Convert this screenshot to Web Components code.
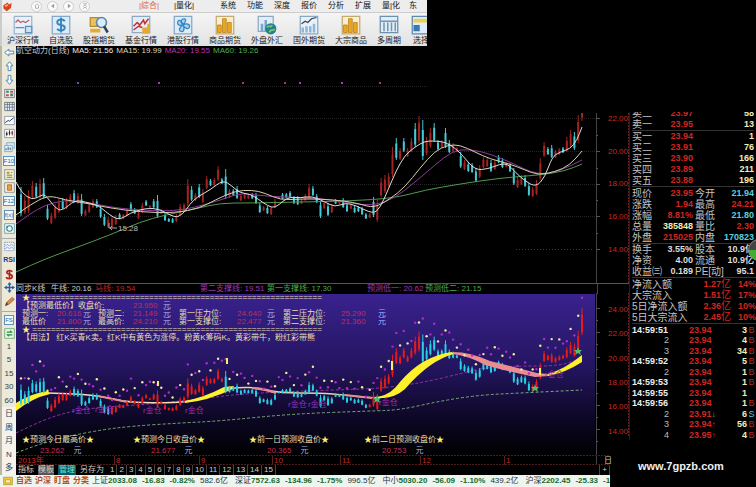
<!DOCTYPE html>
<html lang="zh-CN">
<head>
<meta charset="utf-8">
<title>航空动力 日线</title>
<style>
  html { background: #000; }
  body {
    margin: 0; background: #000; color: #ccc;
    font: 8px/10px "Liberation Sans", "Noto Sans CJK SC", sans-serif;
  }
</style>
</head>
<body>
<trade-terminal></trade-terminal>

<script>
// 16x16 glyphs, shared by the toolbar and the side rail
const ICONS = {
  logo: '<path d="M2 6 8 2l2 3 4-2-1 7-6 5-5-4z" fill="#d9441c"/><path d="M4 6l4-2 1 3-4 2z" fill="#f9a060"/>',
  home: '<path d="M2 8l6-6 6 6M4 8v6h8V8" fill="none" stroke="#999" stroke-width="2"/>',
  prev: '<path d="M11 2 3 8l8 6z" fill="#999"/>',
  next: '<path d="M5 2l8 6-8 6z" fill="#999"/>',
  top: '<path d="M3 2h10M3 9l5-4 5 4M3 15l5-4 5 4" fill="none" stroke="#999" stroke-width="2"/>',
  lines: '<path d="M1 1h14v14H1z" fill="#e8f0f8" stroke="#9ab4cc"/><path d="M2 6l2-2 2 2 2-1 2 1 3-2" fill="none" stroke="#b86070"/><path d="M2 10h7M10 9h5v5h-5z" fill="#cfe2f4" stroke="#5b90bd"/>',
  dollar: '<path d="M1 1h14v14H1z" fill="#dcecf8" stroke="#84a9c8"/><path d="M11 5c-1-2-6-2-6 1s6 1 6 4-5 3-6 1M8 2v12" fill="none" stroke="#3584bd" stroke-width="1.5"/>',
  search: '<path d="M1 2h7v7H1z" fill="#eac35c" stroke="#ba8a28"/><path d="M1 11h8v3H1z" fill="#e6ab31"/><circle cx="10" cy="6" r="4" fill="#d8edfa" stroke="#5c86a8" stroke-width="1.3"/><path d="M12 9l3 5" stroke="#345" stroke-width="2"/>',
  fund: '<path d="M1 1h14v13H1z" fill="#e2edf6" stroke="#8ca9c4"/><path d="M2 9l3-3 2 2 3-4 1 3 3-4M2 12l4-3 3 1" fill="none" stroke="#bf3030" stroke-width="1.2"/><path d="M9 10h5v5H9zM13 7h2v8h-2z" fill="#e5aa32"/>',
  flower: '<path d="M1 1h14v14H1z" fill="#dcecf8" stroke="#84a9c8"/><path d="M8 8c-3-3-1-5 1-5s1 3-1 5c4-2 6 0 5 2s-4 0-5-2c2 4 0 6-2 5s0-4 2-5c-4 1-5-1-4-3s4 1 4 3z" fill="#a6d4f2" stroke="#3886be"/>',
  bars: '<path d="M1 1h14v14H1z" fill="#f7eed4" stroke="#c5aa70"/><path d="M2 8h3v6H2zM6 3h3v11H6zM10 6h3v8h-3z" fill="#e9a823" stroke="#bc7a13" stroke-width=".6"/>',
  globe: '<path d="M1 1h12v12H1z" fill="#e2edf6" stroke="#8ca9c4"/><path d="M3 7h2v6H3zM6 4h2v9H6z" fill="#72a7cf"/><circle cx="11" cy="11" r="4.5" fill="#237e8d"/><path d="M8 10c2-3 3 1 4-2M10 14c0-3 4-1 4-3" stroke="#79c66a" fill="none" stroke-width="1.5"/>',
  area: '<path d="M1 1h14v14H1z" fill="#e8f0f8" stroke="#8ca9c4"/><path d="M2 7l3-2 2 1 3-3 4-1" fill="none" stroke="#345"/><path d="M3 14v-4M6 14V9M9 14v-5M12 14V7" stroke="#8fb6d6" stroke-width="2"/>',
  grid: '<path d="M1 1h14v13H1z" fill="#e2edf6" stroke="#6c91b0"/><path d="M1 5h14M4 6v7M7 6v7M10 6v7M13 6v7" stroke="#7296b4" stroke-width="1.2"/>',
  pick: '<path d="M1 1h14v14H1z" fill="#dcecf8" stroke="#5f88a8"/><path d="M2 3h12v3H2z" fill="#e8d050"/><path d="M2 8h5v5H2z" fill="#3b79ac"/>',
  left: '<path d="M1 8l6-5v3h7v4H7v3z" fill="#fff" stroke="#3f7fb8" stroke-width="1.3"/>',
  up: '<path d="M8 1l5 6h-3v7H6V7H3z" fill="#fff" stroke="#3f7fb8" stroke-width="1.3"/>',
  down: '<path d="M8 15l5-6h-3V2H6v7H3z" fill="#fff" stroke="#3f7fb8" stroke-width="1.3"/>',
  report: '<path d="M1 2h14v12H1z" fill="#e5edf2" stroke="#557"/><path d="M3 4h4v3H3zM9 8h4v4H9z" fill="#3c8a70"/><path d="M9 4h4v3H9zM3 9h4v3H3z" fill="#c25050"/>',
  table: '<path d="M1 2h14v12H1z" fill="#e8eef2" stroke="#456"/><path d="M1 5h14M1 9h14M5 2v12M8 2v12M12 2v12" stroke="#567"/>',
  trend: '<path d="M1 2h14v12H1z" fill="#fff" stroke="#679"/><path d="M2 11l4-3 2 1 6-5" fill="none" stroke="#234" stroke-width="1.4"/>',
  kline: '<path d="M1 2h14v12H1z" fill="#fff" stroke="#679"/><path d="M4 5v7M8 3v8M12 4v7" stroke="#222"/><path d="M3 7h2v3H3zM7 5h2v4H7z" fill="#222"/><path d="M11 5h2v4h-2z" fill="#b22"/>',
  stack: '<path d="M4 1h11v8H4z" fill="#dcecf8" stroke="#5d93bd"/><path d="M1 5h11v9H1z" fill="#e8f3fa" stroke="#5d93bd"/><path d="M3 12V9M6 12V7M9 12V8" stroke="#368" stroke-width="1.5"/>',
  news: '<path d="M1 1h14v14H1z" fill="#f6f2d0" stroke="#678"/><path d="M4 4h4v3H4z" fill="#d68530"/><path d="M4 9h8M4 12h8M10 5h2" stroke="#578a4a" stroke-width="1.4"/>',
  block: '<path d="M1 1h14v14H1z" fill="#f8eddb" stroke="#678"/><path d="M5 4h6v8H5z" fill="#e8a040" stroke="#b64a20"/>',
  cycle: '<path d="M1 1h14v14H1z" fill="#f2faf8" stroke="#47859b"/><circle cx="8" cy="8" r="4" fill="none" stroke="#38818a" stroke-width="1.5"/><path d="M3 4l3 1-1 3" fill="#38818a"/>',
  wave: '<path d="M1 2h14v12H1z" fill="#f0f6ff" stroke="#557db0" stroke-dasharray="2 1"/><path d="M2 7l3-2 3 2 3-2 3 2M2 11l3-2 3 2 3-2 3 2" fill="none" stroke="#77a"/>',
  money: '<path d="M12 4c-2-3-8-2-8 1s8 2 8 6-7 4-9 1M8 1v14" fill="none" stroke="#b02420" stroke-width="2.4"/>',
  move: '<path d="M8 0l3 4H9v3h3V5l4 3-4 3V9H9v3h2l-3 4-3-4h2V9H4v2L0 8l4-3v2h3V4H5z" fill="#2b5d9c"/>',
  pencil: '<path d="M2 14l2-5 8-7 3 3-8 7z" fill="#d89048" stroke="#8c4c20"/><path d="M2 14l2-5 2 3z" fill="#432"/>',
  swap: '<path d="M1 1h14v14H1z" fill="#e8f7e4" stroke="#4a9a5a"/><path d="M4 6h7l-2-2M12 10H5l2 2" fill="none" stroke="#2d8a40" stroke-width="1.7"/>',
  mail: '<path d="M1 2h14v12H1z" fill="#f2c840" stroke="#a88018"/><path d="M4 6h8v5H4z" fill="#fff3b0" stroke="#b88f26"/>'
};

const icon = (name) => `<svg viewBox="0 0 16 16" aria-hidden="true">${ICONS[name]}</svg>`;

function define(name, render) {
  customElements.define(name, class extends HTMLElement {
    constructor() {
      super();
      this.attachShadow({ mode: 'open' });
    }
    connectedCallback() {
      this.shadowRoot.innerHTML = render(this);
    }
  });
}

/* ---------- price data ---------- */

// one entry per day: r = up, c = down, then the high and low on the main chart
const DAYS = (
  'c187-216 r196-214 r190-213 r181-199 c183-198 r179-199 c178-199 c205-220 r213-224 r204-219 r199-213 c198-209 ' +
  'r198-209 r194-203 c190-203 r193-204 c194-216 r209-216 r203-213 r199-208 c199-208 c206-218 c214-226 r217-228 ' +
  'r216-228 r215-225 c213-219 r214-219 r209-216 c202-211 c208-214 r211-219 r203-213 c200-206 r205-208 ' +
  'c199-208 c195-218 r209-214 c213-221 c218-222 c218-223 r214-222 r204-216 r203-211 r179-206 c186-201 r193-201 ' +
  'c184-198 r189-203 r176-189 c179-186 r178-186 r166-181 c178-184 c169-199 r189-198 c189-196 c186-199 r194-201 ' +
  'r193-199 r194-199 c193-199 c193-204 c203-213 r206-211 c206-214 r206-215 r199-208 r196-199 c193-199 c193-198 ' +
  'c191-198 c196-204 c196-205 r199-204 r194-201 r184-199 c186-196 c194-203 c201-218 r201-209 c203-216 r204-213 ' +
  'c199-204 r200-204 c198-208 c203-212 r204-209 c206-213 c206-212 c207-215 c213-219 r213-218 c197-217 r200-222 ' +
  'r178-197 r175-193 r173-187 r147-177 c138-160 r148-160 c138-152 r148-157 r138-152 c123-147 r116-143 c120-160 ' +
  'r137-155 r128-148 c123-142 c140-150 r140-148 c128-148 c140-153 r143-152 r147-152 c152-168 r160-170 c162-172 ' +
  'c163-173 c168-182 r165-178 r157-168 r158-167 c160-172 r160-170 c155-163 c158-168 r162-167 c163-172 c168-185 ' +
  'r177-188 r175-185 c175-187 c183-196 r187-197 r180-195 r158-180 r142-157 c147-155 c145-158 r150-158 r148-155 ' +
  'c147-153 r137-152 r130-147 c132-150 r115-143 r84-121'
).split(' ').map((entry, i, all) => {
  const [high, low] = entry.slice(1).split('-').map(Number);
  return { up: entry[0] === 'r', high, low, x: 21 + i * 561 / (all.length - 1) };
});

const SCALE = 0.745;
const toLower = (y) => 333 + (y - 118) * SCALE;

// x ranges where the signal chart paints falling days
const FALLING = [[16, 50], [74, 110], [224, 366], [420, 531]];

function candle(x, high, low, colour, width) {
  const body = (low - high) / 4;
  return `<path d="M${x.toFixed(1)} ${high.toFixed(1)}V${low.toFixed(1)}" stroke="${colour}"/>` +
    `<rect x="${(x - width / 2).toFixed(1)}" y="${(high + body).toFixed(1)}" width="${width}" height="${(body * 2.6).toFixed(1)}" fill="${colour}"/>`;
}

// smooth line through "x,y x,y ..." points
function curve(points, attrs) {
  const p = points.split(' ').map((s) => s.split(',').map(Number));
  let d = `M${p[0]}`;
  for (let i = 1; i < p.length; i++) {
    const mid = (p[i - 1][0] + p[i][0]) / 2;
    const my = (p[i - 1][1] + p[i][1]) / 2;
    d += i === 1 ? `L${mid},${my}` : `Q${p[i - 1]} ${mid},${my}`;
  }
  return `<path d="${d}L${p.at(-1)}" fill="none" ${attrs}/>`;
}

/* ---------- menu and toolbar ---------- */

define('tool-item', (el) => `
  <style>
    :host { display: block; flex: none; }
    button {
      display: flex; flex-direction: column; align-items: center; gap: 1px;
      padding: 0; border: 0; background: none; color: #222; font: inherit;
      line-height: 10px; white-space: nowrap;
    }
    svg { width: 20px; height: 20px; display: block; }
  </style>
  <button type="button">${icon(el.getAttribute('icon'))}<span><slot></slot></span></button>
`);

define('menu-bar', () => `
  <style>
    :host { display: block; overflow: hidden; height: 46px; background: linear-gradient(#fcfcfc, #e2e2e2); border-left: 2px solid #ccc; box-sizing: border-box; }
    nav { display: grid; grid-template-columns: 29px 108px 35px 46px repeat(7, 27px) 20px; height: 12px; align-items: center; background: #ededed; color: #111; overflow: hidden; }
    a { color: inherit; text-decoration: none; white-space: nowrap; line-height: 12px; }
    a.on { color: #d86a35; }
    .logo svg { width: 11px; height: 11px; display: block; }
    .round { display: flex; gap: 5px; }
    .round button { width: 11px; height: 11px; padding: 1px; border: 1px solid #ccc; border-radius: 50%; background: #fafafa; display: grid; place-items: center; box-sizing: border-box; }
    .round svg { width: 6px; height: 6px; }
    .tools { display: flex; gap: 10px; padding: 2px 0 0 5px; border-top: 1px solid #ccc; }
  </style>
  <nav>
    <span class="logo">${icon('logo')}</span>
    <span class="round">
      <button aria-label="首页">${icon('home')}</button><button aria-label="后退">${icon('prev')}</button>
      <button aria-label="前进">${icon('next')}</button><button aria-label="顶部">${icon('top')}</button>
    </span>
    <a class="on" href="#">|综合|</a><a href="#">|量化|</a>
    ${['系统', '功能', '深度', '报价', '分析', '扩展', '量|化', '东'].map((t) => `<a href="#">${t}</a>`).join('')}
  </nav>
  <div class="tools">
    <tool-item icon="lines">沪深行情</tool-item>
    <tool-item icon="dollar">自选股</tool-item>
    <tool-item icon="search">股指期货</tool-item>
    <tool-item icon="fund">基金行情</tool-item>
    <tool-item icon="flower">港股行情</tool-item>
    <tool-item icon="bars">商品期货</tool-item>
    <tool-item icon="globe">外盘外汇</tool-item>
    <tool-item icon="area">国外期货</tool-item>
    <tool-item icon="bars">大宗商品</tool-item>
    <tool-item icon="grid">多周期</tool-item>
    <tool-item icon="pick">选择</tool-item>
  </div>
`);

define('side-rail', () => {
  const pic = (name, label) => `<button aria-label="${label}">${icon(name)}</button>`;
  const txt = (t, cls = '') => `<button class="${cls}">${t}</button>`;
  return `
  <style>
    :host { display: flex; flex-direction: column; background: #ece9d8; border-left: 2px solid #bbb5a5; box-sizing: border-box; }
    button {
      flex: 1 1 0; min-height: 0; padding: 0; border: 0; background: none; color: #345;
      font: inherit; line-height: 10px; display: grid; place-items: center;
    }
    svg { width: 11px; height: 11px; }
    hr { width: 100%; height: 3px; margin: 0; border: 0; border-bottom: 1px solid #aaa; margin-bottom: 1px; }
    .rsi { font-weight: bold; font-size: 7px; color: #22369c; }
    .box span { border: 1px solid #5d93bd; background: #f2f8fc; color: #2b6a9c; line-height: 8px; font-size: 6px; }
    .cjk { font-size: 8px; color: #246; background: #f4f2ea; }
  </style>
  ${pic('left', '左')}${pic('up', '上')}${pic('down', '下')}
  ${pic('report', '报表')}${pic('table', '列表')}${pic('trend', '走势')}${pic('kline', 'K线')}${pic('stack', '多图')}
  ${txt('<span>F10</span>', 'box')}${pic('news', '资讯')}${pic('block', '板块')}
  ${txt('<span>F12</span>', 'box')}${txt('<span>f(x)</span>', 'box')}${pic('cycle', '刷新')}
  <hr>
  ${pic('wave', '指标')}${txt('RSI', 'rsi')}${pic('money', '资金')}${pic('move', '移动')}${pic('pencil', '画线')}
  <hr>
  ${txt('<span>FS</span>', 'box')}${pic('swap', '切换')}
  ${['1', '5', '15', '30', '60'].map((t) => txt(t)).join('')}
  ${['日', '周', '月', 'N', '多'].map((t) => txt(t, 'cjk')).join('')}`;
});

/* ---------- charts ---------- */

define('price-chart', () => `
  <style>
    :host { display: block; }
    p { margin: 0; display: flex; gap: 3px; white-space: nowrap; line-height: 10px; color: #ccc; overflow: hidden; }
    .ma5 { color: #eee; } .ma15 { color: #ddd8b8; } .ma20 { color: #b035b8; } .ma60 { color: #55a858; }
    svg { display: block; width: 100%; height: auto; }
    text { font-size: 8px; fill: #c42a22; }
    .low { fill: #bbb; }
  </style>
  <p><span>航空动力(日线)</span><span class="ma5">MA5: 21.56</span><span class="ma15">MA15: 19.99</span><span class="ma20">MA20: 19.55</span><span class="ma60">MA60: 19.26</span></p>
  <svg viewBox="16 56 613 227" role="img" aria-label="日K线">
    <clipPath id="view"><path d="M16 56h411v57h202v170H16z"/></clipPath>
    <g clip-path="url(#view)">
      <path d="M16 86.500H596M16 118.500H596M16 151.500H596M16 184.500H596M16 216.500H596" stroke="#252525" stroke-dasharray="1 1"/>
      <path d="M110 249.500H238M516 249.500H594" stroke="#3a3a3a" stroke-dasharray="1 2"/>
      <path d="M596.500 113V283" stroke="#444"/>
      <path d="M628.500 113V283" stroke="#6a2020" stroke-dasharray="2 1"/>
      <path d="M596 118.500h4M596 135.500h2M596 151.500h4M596 168.500h2M596 184.500h4M596 200.500h2M596 216.500h4M596 233.500h2M596 249.500h4" stroke="#555"/>
      ${DAYS.map((d) => candle(d.x, d.high, d.low, d.up ? '#a3241e' : '#45c9d6', 2)).join('')}
      ${curve('16,272 45,259 75,248 110,235 140,222 165,215 195,209 220,203 250,203 300,202 350,201 395,198 425,190 460,184 500,178 540,175 565,171 582,164', 'stroke="#4f9a50"')}
      ${curve('16,224 30,214 45,205 65,200 85,202 105,206 125,209 175,212 215,202 240,193 255,195 280,197 320,198 350,203 374,206 395,198 415,182 435,165 452,151 470,149 490,154 510,162 537,175 560,171 582,160', 'stroke="#8b3a9a"')}
      ${curve('16,215 30,205 48,195 65,200 85,203 110,208 140,212 175,213 200,208 215,200 235,191 252,190 265,193 280,200 300,199 320,199 345,201 360,204 374,208 390,199 405,187 420,168 435,151 448,145 460,145 475,152 490,159 510,164 525,170 538,175 555,172 570,165 582,151', 'stroke="#d8cfa8"')}
      ${curve('16,182 22,193 32,200 40,196 45,194 55,208 62,211 75,200 85,202 98,205 106,212 113,217 120,220 130,213 146,208 160,209 175,218 183,214 190,204 197,197 210,190 223,180 232,186 240,193 250,194 258,199 268,206 275,208 283,201 290,197 300,198 312,196 325,202 335,207 345,203 355,205 373,214 380,208 388,190 396,171 405,155 415,147 425,141 435,141 445,142 455,148 463,156 475,170 488,169 500,164 508,164 515,172 525,181 536,187 545,177 552,157 560,152 570,149 577,140 582,127', 'stroke="#ddd"')}
      <path d="M109 223v5h8M112 226l-2 2 2 2" fill="none" stroke="#aaa"/>
      <text class="low" x="118" y="231">15.28</text>
      ${[[78, '#7048c0'], [159, '#a838b8'], [243, '#b83848'], [285, '#b83848'], [300, '#a838b8'], [342, '#a838b8'], [380, '#b83848']]
        .map(([x, c]) => `<path d="M${x - 1} 82l2 2m0-2l-2 2" stroke="${c}"/>`).join('')}
      ${['22.00', '20.00', '18.00', '16.00', '14.00'].map((t, i) => `<text x="608" y="${121 + Math.round(i * 32.7)}">${t}</text>`).join('')}
    </g>
  </svg>
`);

define('signal-chart', () => {
  const days = DAYS.map((d) => ({
    x: d.x, high: toLower(d.high), low: toLower(d.low),
    down: FALLING.some(([a, b]) => d.x >= a && d.x <= b)
  }));
  const dots = days.map((d, i) => {
    const y = Math.max(297, d.high - 6 - (i * 7) % 12);
    return `<circle cx="${d.x.toFixed(1)}" cy="${y.toFixed(1)}" r="1.2" fill="${(i * 3) % 5 < 2 ? '#f4eaa0' : '#b02ad0'}"/>`;
  }).join('');
  const star = (x, y) => `<path transform="translate(${x} ${y})" d="M0-4 1-1H4L2 1 3 4 0 2-3 4-2 1-4-1H-1z" fill="#4cc06c"/>`;
  const cells = (row) => row.map((t, i) => `<span class="${['', 'num', 'unit'][i % 3]}">${t}</span>`).join('');
  const rule = `<div class="rule"><b>★</b> ${'='.repeat(62)}</div>`;
  const forecast = [['预测今日最高价', '23.262'], ['预测今日收盘价', '21.677'], ['前一日预测收盘价', '20.365'], ['前二日预测收盘价', '20.753']];
  return `
  <style>
    :host { display: block; }
    .head { display: grid; grid-template-columns: 35px 44px 105px 67px 100px 58px 1fr 32px; height: 10px; line-height: 10px; border-top: 1px solid #555; box-sizing: border-box; white-space: nowrap; color: #ccc; }
    .head i { border-left: 1px solid #444; }
    .red { color: #b52c2c; } .violet { color: #a035b0; } .green { color: #4ca850; }
    .stage { display: grid; }
    .stage > * { grid-area: 1 / 1; }
    svg { display: block; width: 100%; height: auto; }
    .axis { font-size: 8px; fill: #c42a22; }
    .mark { font-size: 8px; fill: #9a2fb4; }
    .over { display: flex; flex-direction: column; justify-content: space-between; color: #e9dfae; white-space: nowrap; line-height: 8px; padding: 1px 0 9px 6px; }
    .grid { display: grid; grid-template-columns: 35px 26px 15px 35px 30px 16px 58px 30px 16px 58px 37px 1fr; }
    .sub { display: grid; grid-template-columns: 111px 30px 1fr; }
    .num { color: #c42c50; } .unit { color: #a0aff0; }
    b { font-weight: normal; color: #fff26a; }
    .days { display: grid; grid-template-columns: 111px 116px 115px 1fr; line-height: 11px; }
    .days p { margin: 0; display: flex; gap: 9px; padding-left: 18px; }
  </style>
  <div class="head">
    <span>同步K线</span><span>牛线: 20.16</span><span class="red">马线: 19.54</span>
    <span class="violet">第二支撑线: 19.51</span><span class="green">第一支撑线: 17.30</span>
    <span class="violet">预测低一: 20.62</span><span class="green">预测低二: 21.15</span><i></i>
  </div>
  <div class="stage">
    <svg viewBox="16 293 613 172" role="img" aria-label="预测信号">
      <defs><linearGradient id="sky" x2="0" y2="1">
        <stop offset="0" stop-color="#39228e"/><stop offset=".45" stop-color="#241560"/><stop offset=".8" stop-color="#0b0620"/><stop offset="1" stop-color="#000"/>
      </linearGradient></defs>
      <path d="M16 294H595V455H16z" fill="url(#sky)"/>
      <path d="M596.500 293V465" stroke="#444"/>
      <path d="M628.500 293V437" stroke="#6a2020" stroke-dasharray="2 1"/>
      <path d="M16 455.500H610M16 464.500H610" stroke="#4a1c1c" stroke-dasharray="2 1"/>
      <path d="M596 308.500h4M596 332.500h4M596 357.500h4M596 381.500h4M596 405.500h4M596 429.500h4M596 320.500h2M596 344.500h2M596 369.500h2M596 393.500h2M596 417.500h2M596 441.500h2" stroke="#555"/>
      <path d="M114.500 456v9M199.500 456v9M272.500 456v9M340.500 456v9M420.500 456v9M504.500 456v9" stroke="#5a2020"/>
      ${curve('16,433 37,423 60,414 90,408 140,405 200,399 240,394 300,391 370,389 400,386 430,381 463,373 483,368 516,366 560,366 582,358', 'stroke="#8f35a5" stroke-dasharray="3 2"')}
      ${curve('16,453 37,445 65,437 100,430 133,426 180,423 220,421 290,414 370,411 400,410 440,401 480,395 520,393 582,390', 'stroke="#7aa878" stroke-dasharray="3 2"')}
      ${curve('48,393 75,394 90,395 110,398 127,402 160,403 185,402 200,399', 'stroke="#f5dcb4" stroke-width="1.5"')}
      ${curve('222,390 240,387 258,388 280,393 320,393 345,395 370,398 385,397', 'stroke="#f0d0a8" stroke-width="1.5"')}
      <path d="M16 403Q32 393 48 391L50 394Q32 398 16 411z" fill="#fff02c"/>
      <path d="M98 395L127 401V403L98 397zM252 387Q265 387 276 392V394Q264 390 252 389zM345 394L372 397V399L345 396z" fill="#e58b92"/>
      <path d="M185 401Q205 397 224 387L234 386 233 389Q207 401 185 403z" fill="#fff02c"/>
      ${days.map((d) => candle(d.x, d.high, d.low, d.down ? '#27cfe2' : '#e21c1c', 2)).join('')}
      <path d="M378 397Q392 394 400 382 422 356 452 352L454 354Q430 360 405 389 394 399 378 398z" fill="#fff02c"/>
      <path d="M453 352Q470 352 490 361L537 373 548 374V376L535 377Q505 371 485 365 469 356 453 354z" fill="#ea8d92"/>
      <path d="M548 374Q565 369 582 355V362Q565 373 548 376z" fill="#fff02c"/>
      ${dots}
      <path d="M227 358v6M392 361v9M540 368v7M158 381v5" stroke="#f8ee60" stroke-width="2"/>
      ${[[72, 413], [95, 412], [143, 413], [185, 413], [288, 407], [308, 407], [379, 405], [545, 377]]
        .map(([x, y]) => `<text class="mark" x="${x}" y="${y}">r金仓</text>`).join('')}
      ${star(377, 399)}${star(535, 388)}${star(578, 351)}
      ${['24.00', '22.00', '20.00', '18.00', '16.00', '14.00'].map((t, i) => `<text class="axis" x="608" y="${312 + Math.round(i * 24.3)}">${t}</text>`).join('')}
      ${[[18, '2013年'], [116, '8'], [201, '9'], [274, '10'], [342, '11'], [422, '12'], [506, '1']]
        .map(([x, t]) => `<text class="axis" x="${x}" y="463">${t}</text>`).join('')}
      <text x="604" y="463" font-size="8" fill="#ccc">日</text>
    </svg>
    <div class="over">
      <div>
        ${rule}
        <div class="sub"><span>【预测最低价】收盘价:</span><span class="num">23.950</span><span class="unit">元</span></div>
        <div class="grid">${cells(['预测一:', '20.616', '元', '预测二:', '21.149', '元', '第一压力位:', '24.640', '元', '第二压力位:', '25.290', '元'])}</div>
        <div class="grid">${cells(['最低价', '21.800', '元', '最高价:', '24.210', '元', '第一支撑位:', '22.477', '元', '第二支撑位:', '21.360', '元'])}</div>
        ${rule}
        <div>【用法】 红K买青K卖。红K中有黄色为涨停。粉黄K筹码K。黄彩带牛，粉红彩带熊</div>
      </div>
      <div class="days">
        ${forecast.map(([t, n]) => `<div><b>★</b>${t}<b>★</b><p><span class="num">${n}</span><span class="unit">元</span></p></div>`).join('')}
      </div>
    </div>
  </div>`;
});

define('template-tabs', () => `
  <style>
    :host { display: flex; align-items: stretch; height: 10px; margin-right: 19px; padding-left: 2px; color: #ccc; }
    button { padding: 0 2px; border: 0; border-right: 1px solid #444; background: none; color: inherit; font: inherit; line-height: 10px; white-space: nowrap; }
    .name { border: 0; padding: 0; margin-right: 4px; }
    .grey { background: #555; } .teal { background: #0b5a60; color: #6fe0e0; padding: 0 1px; }
    .add { margin-left: auto; border-left: 1px solid #444; }
  </style>
  <button class="name">指标</button><button class="name grey">模板</button><button class="name teal">管理</button><button class="name">另存为</button>
  ${Array.from({ length: 15 }, (_, i) => `<button>${i + 1}</button>`).join('')}
  <button class="add" aria-label="添加">+</button>
`);

/* ---------- quotes ---------- */

define('quote-board', () => {
  const cols = '<colgroup><col style="width:30px"><col><col style="width:30px"><col></colgroup>';
  const info = (a, av, ac, b, bv, bc, row = '') =>
    `<tr class="${row}"><th>${a}</th><td class="${ac}">${av}</td><th>${b}</th><td class="${bc}">${bv}</td></tr>`;
  const order = (label, price, vol, row) => info(label, price, 'r', '', vol, 'y', row);
  const flow = (label, value, pct) => `<tr><th>${label}</th><td class="r">${value}<small>亿</small></td><td class="r">${pct}</td></tr>`;
  const tick = (time, price, vol, side = 'B', arrow = '') => `
    <tr><td class="${time.length > 1 ? 'time' : 'seq'}">${time}</td>
    <td class="r price">${price}<i class="${arrow === '↓' ? 'g' : ''}">${arrow}</i></td>
    <td class="y">${vol}</td><td class="side ${side === 'S' ? 'c' : ''}">${side}</td></tr>`;
  return `
  <style>
    :host { display: block; position: relative; overflow: hidden; box-sizing: border-box; padding: 0 2px; border-left: 1px solid #3a1515; }
    table { width: 100%; table-layout: fixed; border-collapse: separate; border-spacing: 0; white-space: nowrap; }
    tr { height: 11px; }
    th, td { padding: 0; line-height: 11px; font-size: 9px; }
    th { font-size: 10px; font-weight: normal; text-align: left; color: #c4c4c4; }
    th:nth-child(3) { padding-left: 2px; }
    td { font-weight: bold; text-align: right; }
    .line td, .line th { border-top: 1px solid #333; }
    .gap td, .gap th { padding-top: 1px; }
    .clip { height: 7px; overflow: hidden; display: flex; flex-direction: column; justify-content: flex-end; }
    .r { color: #d12520; } .y { color: #f2edb4; } .c { color: #55cfdf; } .w { color: #ddd; } .g { color: #37d067; }
    small { font-size: 10px; line-height: 0; font-weight: normal; }
    .flow, .ticks { margin-right: -2px; width: calc(100% + 2px); border-top: 1px solid #333; }
    .flow { padding-top: 1px; }
    .ticks tr:nth-child(even) { height: 10px; }
    .ticks td { line-height: 10px; }
    .ticks .time { text-align: left; color: #eee; }
    .ticks .seq { font-weight: normal; color: #bbb; }
    .ticks .price { text-align: left; padding-left: 20px; }
    .ticks i { font-style: normal; font-size: 8px; line-height: 0; }
    .ticks .side { text-align: center; font-weight: normal; }
    .side:not(.c) { color: #b82820; }
    .ball { position: absolute; right: -14px; top: 127px; width: 20px; height: 20px; border: 1px solid #888; border-radius: 50%; background: linear-gradient(#444 50%, #3fae35 50%); }
  </style>
  <div class="clip"><table>${cols}${order('卖二', '23.97', '58')}</table></div>
  <table>
    ${cols}
    <tbody>${order('卖一', '23.95', '13')}</tbody>
    <tbody>
      ${order('买一', '23.94', '1', 'line')}${order('买二', '23.91', '76')}${order('买三', '23.90', '166')}
      ${order('买四', '23.89', '211')}${order('买五', '23.88', '196')}
    </tbody>
    <tbody>
      ${info('现价', '23.95', 'r', '今开', '21.94', 'c', 'line gap')}
      ${info('涨跌', '1.94', 'r', '最高', '24.21', 'r')}
      ${info('涨幅', '8.81%', 'r', '最低', '21.80', 'c')}
      ${info('总量', '385848', 'y', '量比', '2.30', 'r')}
      ${info('外盘', '215025', 'r', '内盘', '170823', 'c')}
    </tbody>
    <tbody>
      ${info('换手', '3.55%', 'w', '股本', '10.9亿', 'w', 'line')}
      ${info('净资', '4.00', 'w', '流通', '10.9亿', 'w')}
      ${info('收益㈢', '0.189', 'w', 'PE[动]', '95.1', 'w')}
    </tbody>
  </table>
  <table class="flow">
    <colgroup><col><col style="width:37px"><col style="width:25px"></colgroup>
    ${flow('净流入额', '1.27', '14%')}${flow('大宗流入', '1.51', '17%')}${flow('5日净流入额', '2.36', '10%')}${flow('5日大宗流入', '2.45', '10%')}
  </table>
  <table class="ticks">
    <colgroup><col style="width:37px"><col><col style="width:28px"><col style="width:9px"></colgroup>
    ${tick('14:59:51', '23.94', '3')}${tick('2', '23.94', '4')}${tick('3', '23.94', '34')}
    ${tick('14:59:52', '23.94', '5')}${tick('2', '23.94', '1')}${tick('14:59:53', '23.94', '1')}
    ${tick('14:59:55', '23.94', '1', '')}${tick('14:59:56', '23.94', '1')}
    ${tick('2', '23.91', '6', 'S', '↓')}${tick('3', '23.94', '56', 'B', '↑')}${tick('4', '23.95', '4', 'B', '↑')}
  </table>
  <span class="ball"></span>`;
});

define('index-ticker', () => {
  const rows = [
    ['上证', '2033.08', '-16.83', '-0.82%', '582.6亿'],
    ['深证', '7572.63', '-134.96', '-1.75%', '996.5亿'],
    ['中小', '5030.20', '-56.09', '-1.10%', '439.2亿'],
    ['沪深', '2202.45', '-25.33', '-1', '']
  ];
  return `
  <style>
    :host { display: flex; align-items: center; height: 12px; margin-right: 19px; padding-left: 3px; overflow: hidden; white-space: nowrap; background: #edf5ef; line-height: 12px; }
    svg { width: 10px; height: 10px; flex: none; margin-right: 3px; }
    a { color: #b8501c; text-decoration: none; font-weight: bold; margin-right: 3px; }
    span { flex: none; display: flex; gap: 5px; margin-right: 7px; color: #234; }
    i { font-style: normal; }
    b { color: #17692a; }
  </style>
  ${icon('mail')}
  ${['自选', '沪深', '盯盘', '分类'].map((t) => `<a href="#">${t}</a>`).join('')}
  ${rows.map(([n, a, b, c, d]) => `<span><i>${n}<b>${a}</b></i><b>${b}</b><b>${c}</b>${d}</span>`).join('')}`;
});

define('trade-terminal', () => `
  <style>
    :host { display: grid; grid-template-columns: 16px minmax(0, 1fr) 127px; }
    header { grid-column: 1 / -1; display: grid; grid-template-columns: minmax(0, 13fr) 10fr; }
    aside { display: flex; flex-direction: column; padding-top: 66px; grid-row: 2 / 4; grid-column: 3; }
    quote-board { min-height: 325px; }
    aside a { margin: 19px 0 0 9px; color: #eee; font-weight: bold; font-size: 11px; line-height: 14px; text-decoration: none; }
    index-ticker { grid-column: 1 / 3; }
  </style>
  <header><menu-bar></menu-bar></header>
  <side-rail></side-rail>
  <main>
    <price-chart></price-chart>
    <signal-chart></signal-chart>
    <template-tabs></template-tabs>
  </main>
  <aside>
    <quote-board></quote-board>
    <a href="#">www.7gpzb.com</a>
  </aside>
  <index-ticker></index-ticker>
`);
</script>
</body>
</html>
